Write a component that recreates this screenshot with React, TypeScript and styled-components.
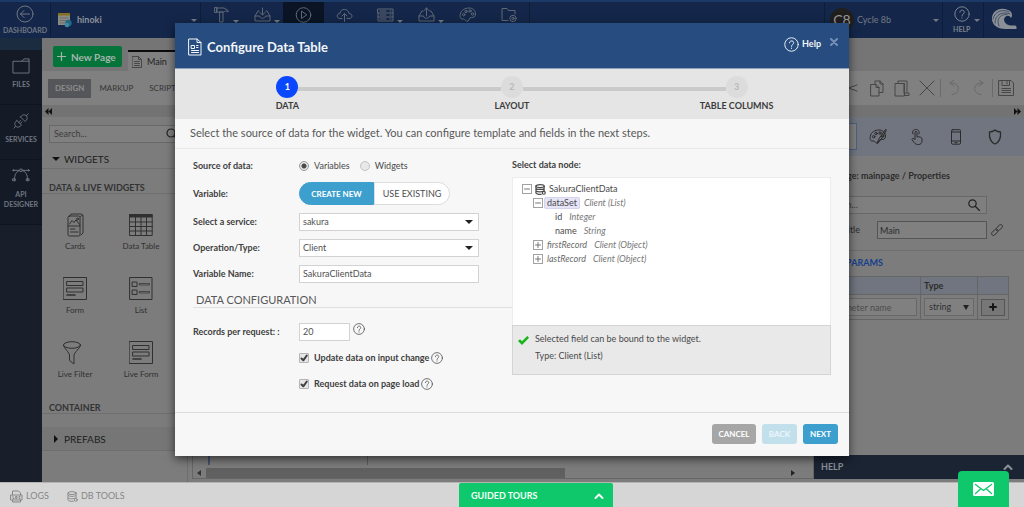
import React from 'react';
import styled, { createGlobalStyle, css } from 'styled-components';

const GlobalStyle = createGlobalStyle`
  *, *::before, *::after { box-sizing: border-box; }
  body { margin: 0; background: #808080; }
  body, button, input, select, table {
    font-family: Lato, "Liberation Sans", sans-serif;
    font-size: 9px;
    line-height: 14px;
  }
  button { cursor: pointer; }
  a { color: inherit; text-decoration: none; }
`;

const Page = styled.div`
  display: flex;
  flex-direction: column;
  min-height: 100vh;
  overflow: hidden;
`;

const Glyph = styled.svg<{ $w?: number; $h?: number; $sw?: number }>`
  width: ${(p) => p.$w ?? 20}px;
  height: ${(p) => p.$h ?? p.$w ?? 20}px;
  flex: none;
  fill: none;
  stroke: currentColor;
  stroke-width: ${(p) => p.$sw ?? 1};
  stroke-linecap: round;
  stroke-linejoin: round;
`;

const Caret = styled.span<{ $color?: string }>`
  width: 0;
  height: 0;
  flex: none;
  border: 3px solid transparent;
  border-top-color: ${(p) => p.$color ?? '#747a84'};
  border-bottom: 0;
`;

/* ---------- top bar ---------- */

const TopBar = styled.header`
  display: flex;
  height: 38px;
  background: #14274a;
  border-top: 2px solid #1b3a68;
  color: #6f7682;
`;

const Dashboard = styled.a`
  width: 51px;
  display: flex;
  flex-direction: column;
  align-items: center;
  padding-top: 3px;
  font-size: 7px;
  line-height: 10px;
  font-weight: 700;
  gap: 2px;
  border-right: 1px solid #0f1e38;
`;

const Project = styled.button`
  width: 150px;
  display: flex;
  align-items: center;
  gap: 4px;
  padding: 0 3px 0 6px;
  border: 0;
  border-right: 1px solid #0f1e38;
  background: none;
  color: #8b919a;
  font-weight: 700;
  span:last-child { margin-left: auto; }
`;

const TopTool = styled.button<{ $active?: boolean }>`
  width: 41px;
  padding: 4px 0 0;
  display: flex;
  align-items: flex-start;
  justify-content: center;
  position: relative;
  border: 0;
  background: ${(p) => (p.$active ? '#0a1424' : 'none')};
  color: #5f6875;
  ${Caret} { position: absolute; right: 3px; top: 18px; }
`;

const TopSpacer = styled.div`
  flex: 1;
  border-left: 1px solid #0f1e38;
  border-right: 1px solid #0f1e38;
`;

const Account = styled.button`
  width: 118px;
  display: flex;
  align-items: center;
  gap: 3px;
  padding: 0 3px 0 5px;
  border: 0;
  border-right: 1px solid #0f1e38;
  background: none;
  color: #747a84;
  > span:last-child { margin-left: auto; }
`;

const Avatar = styled.span`
  width: 24px;
  height: 24px;
  border-radius: 50%;
  display: flex;
  align-items: center;
  justify-content: center;
  background: #211f1e;
  color: #9a9a9a;
  font-size: 14px;
`;

const HelpMenu = styled.button`
  width: 41px;
  display: flex;
  align-items: center;
  gap: 4px;
  padding: 0 4px 0 10px;
  border: 0;
  border-right: 1px solid #0f1e38;
  background: none;
  color: #7b828c;
`;

const HelpStack = styled.span`
  display: flex;
  flex-direction: column;
  align-items: center;
  font-size: 7px;
  line-height: 9px;
  font-weight: 700;
  gap: 3px;
`;

const Logo = styled.a`
  width: 40px;
  display: flex;
  justify-content: center;
  padding-top: 5px;
`;

/* ---------- workspace ---------- */

const Workspace = styled.div`
  flex: 1;
  display: flex;
`;

const SideNav = styled.nav`
  width: 42px;
  background: #181f2b;
  border-top: 12px solid #1c2c40;
  color: #717680;
`;

const SideLink = styled.a`
  display: flex;
  flex-direction: column;
  align-items: center;
  gap: 4px;
  padding: 7px 0 15px;
  border-bottom: 1px solid #0f141d;
  background: #141a26;
  font-size: 7px;
  line-height: 10px;
  font-weight: 700;
  text-align: center;
`;

const Studio = styled.main`
  flex: 1;
  min-width: 0;
  display: flex;
  flex-direction: column;
  background: #7c7c7c;
  color: #2c2c2c;
`;

const PageTabs = styled.div`
  height: 33px;
  display: flex;
  background: #757575;
  padding-left: 11px;
`;

const NewPage = styled.button`
  width: 69px;
  height: 21px;
  margin-top: 8px;
  padding: 0 0 0 4px;
  display: flex;
  align-items: center;
  gap: 5px;
  border: 0;
  border-radius: 2px;
  background: #04743a;
  color: #a5b5ac;
  font-size: 10px;
  font-weight: 700;
  white-space: nowrap;
`;

const PageTab = styled.button`
  width: 100px;
  margin: 12px 0 0 6px;
  padding: 0 0 0 4px;
  display: flex;
  align-items: center;
  gap: 5px;
  border: 0;
  border-top: 2px solid #0b0b0b;
  background: #808080;
  color: #222;
  svg { color: #484848; }
`;

const ToolRow = styled.div`
  height: 34px;
  display: flex;
  align-items: center;
  justify-content: space-between;
  background: #808080;
  padding: 0 9px 0 6px;
`;

const ModeGroup = styled.div`
  display: flex;
`;

const Mode = styled.button<{ $active?: boolean }>`
  height: 19px;
  padding: 0 ${(p) => (p.$active ? 7 : 8)}px;
  border: 0;
  background: ${(p) => (p.$active ? '#55565a' : 'none')};
  color: ${(p) => (p.$active ? '#8c8c8c' : '#353535')};
  font-size: 8px;
  font-weight: ${(p) => (p.$active ? 700 : 400)};
`;

const Actions = styled.div`
  display: flex;
  align-items: center;
  gap: 6px;
`;

const Action = styled.button<{ $faint?: boolean }>`
  width: 19px;
  height: 22px;
  padding: 0;
  display: flex;
  align-items: center;
  justify-content: center;
  border: 0;
  background: none;
  color: ${(p) => (p.$faint ? '#686868' : '#464646')};
`;

const Divider = styled.span`
  width: 1px;
  height: 18px;
  margin: 0 -3px 0 -2px;
  background: #6a6a6a;
`;

const CollapseRow = styled.div`
  height: 12px;
  display: flex;
  align-items: center;
  justify-content: space-between;
  padding: 0 3px;
  background: #737373;
  color: #111;
`;

const Columns = styled.div`
  flex: 1;
  display: flex;
`;

const Palette = styled.aside`
  width: 146px;
  flex: none;
  border-right: 1px solid #6d6d6d;
`;

const SearchBox = styled.label<{ $right?: boolean }>`
  height: 18px;
  display: flex;
  align-items: center;
  margin: ${(p) => (p.$right ? '0 37px 0 6px' : '8px 0 0 7px')};
  padding: 0 ${(p) => (p.$right ? 6 : 8)}px 0 4px;
  border: 1px solid #686868;
  background: ${(p) => (p.$right ? '#7f7f7f' : '#808080')};
  color: #222;
  input {
    flex: 1;
    min-width: 0;
    width: 0;
    padding: 0;
    border: 0;
    outline: 0;
    background: none;
    color: #333;
  }
  input::placeholder { color: #3c3c3c; opacity: 1; }
`;

const Accordion = styled.button<{ $open?: boolean }>`
  width: 100%;
  height: ${(p) => (p.$open ? 19 : 24)}px;
  margin-top: ${(p) => (p.$open ? 7 : 13)}px;
  padding: 0 0 0 10px;
  display: flex;
  align-items: center;
  gap: 4px;
  border: 0;
  border-bottom: 1px solid #6f6f6f;
  background: ${(p) => (p.$open ? 'none' : '#767676')};
  color: #202020;
  font-size: 10px;
`;

const GroupTitle = styled.h3<{ $first?: boolean }>`
  margin: ${(p) => (p.$first ? 13 : 0)}px 0 0;
  padding: 0 0 0 7px;
  height: 12px;
  border-bottom: 1px solid #6f6f6f;
  line-height: 12px;
  font-size: 9px;
  font-weight: 700;
  color: #333;
`;

const Tiles = styled.div`
  display: grid;
  grid-template-columns: 66px 66px;
  grid-template-rows: 64px 64px 61px;
  padding-top: 19px;
`;

const Tile = styled.button`
  padding: 0;
  display: flex;
  flex-direction: column;
  align-items: center;
  gap: 2px;
  border: 0;
  background: none;
  color: #303030;
  font-size: 8px;
  white-space: nowrap;
`;

const Canvas = styled.section`
  flex: 1;
  display: flex;
  flex-direction: column;
  justify-content: flex-end;
  margin: 0 0 3px 4px;
  border: 1px solid #666;
  border-top: 0;
`;

const Sheet = styled.div`
  flex: 1;
  display: grid;
  grid-template-columns: 157px 1fr;
  margin: 0 12px 2px 15px;
  border-left: 2px solid #455472;
  div + div { border-left: 1px solid #5d5d5d; }
`;

const ScrollTrack = styled.div`
  height: 11px;
  display: flex;
  align-items: center;
  justify-content: space-between;
  margin-right: 13px;
  padding: 0 5px 0 4px;
`;

const ScrollThumb = styled.div`
  width: 60%;
  height: 10px;
  margin: 0 auto 0 5px;
  background: #606060;
`;

const Inspector = styled.aside`
  width: 210px;
  flex: none;
  display: flex;
  flex-direction: column;
  margin-bottom: 3px;
  background: #7c7c7c;
`;

const InspectorTabs = styled.div`
  height: 39px;
  display: flex;
  align-items: center;
  justify-content: flex-end;
  padding-right: 10px;
  background: #70757f;
`;

const InspectorTab = styled.button<{ $active?: boolean }>`
  width: 39px;
  height: 27px;
  padding: 0;
  display: flex;
  align-items: center;
  justify-content: center;
  border: 1px solid ${(p) => (p.$active ? '#4d5f86' : 'transparent')};
  background: ${(p) => (p.$active ? '#808080' : 'none')};
  color: #2b2b2b;
  &:first-child { margin-right: 1px; }
`;

const Breadcrumb = styled.h2`
  margin: 12px 0 13px 23px;
  font-size: 9px;
  line-height: 15px;
  font-weight: 700;
`;

const TitleField = styled.label`
  display: flex;
  align-items: center;
  justify-content: flex-end;
  margin-top: 7px;
  padding: 0 20px 11px 0;
  border-bottom: 1px solid #6f6f6f;
  color: #2c2c2c;
  input {
    width: 110px;
    height: 18px;
    margin: 0 3px 0 17px;
    padding: 0 2px;
    border: 1px solid #555;
    background: #808080;
    color: #2c2c2c;
  }
`;

const ParamsTitle = styled.h3`
  margin: 5px 0 6px;
  padding-left: 7px;
  font-size: 9px;
  line-height: 14px;
  font-weight: 700;
  color: #173f8c;
`;

const ParamTable = styled.table`
  width: 195px;
  border-collapse: collapse;
  table-layout: fixed;
  td, th { border: 1px solid #656565; padding: 0 3px; text-align: left; }
  th { height: 18px; background: #70757f; font-weight: 700; }
  td { height: 25px; }
  input, select {
    width: 100%;
    height: 18px;
    padding: 0 4px;
    border: 1px solid #686868;
    background: #808080;
    color: #333;
    display: block;
    appearance: none;
  }
  input { padding-left: 8px; }
  input::placeholder { color: #4c4c4c; opacity: 1; text-align: left; }
`;

const TypeSelect = styled.div`
  display: flex;
  align-items: center;
  position: relative;
  ${Caret} { position: absolute; right: 5px; border-width: 5px 3px 0; }
`;

const AddButton = styled.button`
  width: 24px;
  height: 17px;
  padding: 0;
  display: flex;
  align-items: center;
  justify-content: center;
  border: 1px solid #555;
  background: #777;
  color: #151515;
`;

const HelpBar = styled.button`
  height: 24px;
  margin-top: auto;
  padding: 0 11px 0 7px;
  display: flex;
  align-items: center;
  justify-content: space-between;
  border: 0;
  background: #1b2433;
  color: #8b9099;
  font-weight: 700;
`;

/* ---------- status bar ---------- */

const StatusBar = styled.footer`
  height: 25px;
  display: flex;
  align-items: center;
  gap: 18px;
  padding: 2px 0 0 10px;
  border-top: 1px solid #b4b4b4;
  background: #d6d6d6;
  color: #868686;
  position: relative;
`;

const StatusLink = styled.a`
  display: flex;
  align-items: center;
  gap: 3px;
`;

const Tours = styled.button`
  position: absolute;
  left: 459px;
  bottom: 0;
  width: 154px;
  height: 24px;
  padding: 2px 9px 0 12px;
  display: flex;
  align-items: center;
  justify-content: space-between;
  border: 0;
  border-radius: 2px 2px 0 0;
  background: #0fc86c;
  color: #f2fff8;
  font-weight: 700;
`;

const Chat = styled.button`
  position: absolute;
  right: 15px;
  bottom: 0;
  width: 51px;
  height: 36px;
  padding: 0;
  display: flex;
  align-items: center;
  justify-content: center;
  border: 0;
  border-radius: 4px 4px 0 0;
  background: #0fc86c;
`;

/* ---------- dialog ---------- */

const Overlay = styled.div`
  position: absolute;
  top: 23px;
  left: 175px;
  right: 175px;
`;

const Dialog = styled.section`
  background: #f7f7f7;
  box-shadow: 0 3px 9px rgba(0, 0, 0, 0.6);
  color: #4a4a4a;
`;

const DialogHead = styled.header`
  height: 46px;
  display: flex;
  align-items: center;
  gap: 5px;
  padding: 2px 10px 0 13px;
  background: #274c7f;
  border-bottom: 1px solid #8ea0ba;
  color: #f2f5f9;
  h1 {
    margin: 0;
    flex: 1;
    font-size: 13px;
    line-height: 18px;
    font-weight: 700;
  }
`;

const DialogHelp = styled.a`
  display: flex;
  align-items: center;
  gap: 3px;
  margin-right: 3px;
  padding-bottom: 5px;
  font-size: 9px;
  font-weight: 700;
`;

const Close = styled.button`
  width: 10px;
  height: 14px;
  margin-bottom: 8px;
  padding: 0;
  border: 0;
  background: none;
  color: #7590b8;
`;

const Steps = styled.ol`
  height: 50px;
  margin: 0;
  padding: 7px 0 0;
  display: grid;
  grid-template-columns: repeat(3, 1fr);
  background: #e5e5e5;
  list-style: none;
`;

const Step = styled.li<{ $active?: boolean; $joined?: boolean }>`
  position: relative;
  display: flex;
  flex-direction: column;
  align-items: center;
  gap: 1px;
  color: #3c3c3c;
  font-weight: 700;
  ${(p) => p.$joined && css`
    &::before {
      content: '';
      position: absolute;
      top: 11px;
      right: calc(50% + 11px);
      width: calc(100% - 22px);
      height: 4px;
      background: #cacaca;
    }
  `}
  span {
    width: 22px;
    height: 22px;
    border-radius: 50%;
    line-height: 22px;
    text-align: center;
    background: ${(p) => (p.$active ? '#0a48ff' : '#dcdcdc')};
    color: ${(p) => (p.$active ? '#fff' : '#b9b9b9')};
  }
`;

const Intro = styled.p`
  margin: 0;
  padding: 7px 15px 8px;
  border-bottom: 1px solid #e8e8e8;
  font-size: 11px;
  line-height: 14px;
  color: #585858;
`;

const DialogBody = styled.div`
  display: grid;
  grid-template-columns: 1fr 1fr;
  padding: 7px 18px 19px;
`;

const Form = styled.form`
  display: flex;
  flex-direction: column;
  gap: 7px;
`;

const Field = styled.div`
  display: grid;
  grid-template-columns: 106px 180px;
  align-items: center;
  min-height: 19px;
`;

const caption = css`
  font-size: 9px;
  font-weight: 700;
  color: #404040;
`;

const Caption = styled.label`
  ${caption}
`;

const Choices = styled.div`
  display: flex;
  align-items: center;
  gap: 10px;
`;

const Choice = styled.label`
  display: flex;
  align-items: center;
  gap: 5px;
  input {
    appearance: none;
    width: 10px;
    height: 10px;
    margin: 0;
    border: 1px solid #c4c4c4;
    border-radius: 50%;
    background: #e8e8e8;
  }
  input:checked { background: radial-gradient(circle, #4a4a4a 0 2px, #e6e6e6 3px); border-color: #999; }
`;

const Toggle = styled.div`
  width: 151px;
  height: 23px;
  display: flex;
`;

const ToggleOption = styled.button<{ $active?: boolean }>`
  flex: ${(p) => (p.$active ? '0 0 75px' : '1')};
  padding: 0;
  border: 1px solid ${(p) => (p.$active ? '#3c9fce' : '#dcdcdc')};
  border-radius: ${(p) => (p.$active ? '12px 0 0 12px' : '0 12px 12px 0')};
  background: ${(p) => (p.$active ? '#3c9fce' : '#fff')};
  color: ${(p) => (p.$active ? '#fff' : '#4e4e4e')};
  font-size: ${(p) => (p.$active ? 8 : 9)}px;
  font-weight: ${(p) => (p.$active ? 700 : 400)};
`;

const controlBox = css`
  width: 100%;
  height: 18px;
  padding: 0 3px;
  border: 1px solid #d2d2d2;
  border-radius: 0;
  background: #fff;
  color: #505050;
  appearance: none;
`;

const TextInput = styled.input<{ $short?: boolean }>`
  ${controlBox}
  ${(p) => p.$short && 'width: 51px;'}
`;

const SelectWrap = styled.div`
  position: relative;
  display: flex;
  align-items: center;
  select { ${controlBox} }
  ${Caret} { position: absolute; right: 6px; border-width: 4px 4px 0; }
`;

const SectionTitle = styled.h2`
  margin: -7px 0 7px;
  height: 25px;
  padding: 10px 3px 0;
  border-bottom: 1px solid #e0e0e0;
  font-size: 11px;
  line-height: 14px;
  font-weight: 400;
  color: #585858;
`;

const InlineControl = styled.div`
  display: flex;
  align-items: flex-start;
  gap: 3px;
`;

const CheckRow = styled.div`
  height: 19px;
  display: flex;
  align-items: center;
  gap: 2px;
  padding-left: 106px;
  label {
    display: flex;
    align-items: center;
    gap: 5px;
    ${caption}
  }
  input {
    appearance: none;
    width: 10px;
    height: 10px;
    margin: 0;
    border: 1px solid #b5b5b5;
    border-radius: 1px;
    background: #e6e6e6;
  }
`;

const CheckBox = styled.span`
  display: flex;
  position: relative;
  svg { position: absolute; inset: 0; pointer-events: none; }
`;

const NodePane = styled.div`
  display: flex;
  flex-direction: column;
`;

const PaneTitle = styled.h2`
  margin: 2px 0 5px;
  line-height: 14px;
  ${caption}
`;

const Tree = styled.ul`
  height: 148px;
  margin: 0;
  padding: 4px 9px;
  border: 1px solid #ececec;
  border-bottom: 0;
  background: #fff;
  list-style: none;
`;

const TreeRow = styled.li<{ $level: number }>`
  height: 14px;
  display: flex;
  align-items: center;
  gap: 3px;
  padding-left: ${(p) => p.$level * 11}px;
  em { margin-left: 4px; color: #777; }
`;

const Expander = styled.button`
  width: 10px;
  height: 10px;
  padding: 0;
  display: flex;
  align-items: center;
  justify-content: center;
  border: 1px solid #a2a2a2;
  background: #fff;
  color: #777;
`;

const NodeName = styled.span<{ $selected?: boolean; $italic?: boolean }>`
  ${(p) => p.$italic && 'font-style: italic; color: #6a6a6a; padding-left: 1px;'}
  ${(p) => p.$selected && css`
    height: 12px;
    line-height: 10px;
    margin: 0 -3px 0 -2px;
    padding: 0 2px;
    border: 1px solid #d6d3ee;
    border-radius: 2px;
    background: #e6e4f7;
  `}
`;

const Verdict = styled.div`
  height: 50px;
  display: flex;
  gap: 6px;
  padding: 4px 5px;
  border: 1px solid #d4d4d4;
  background: #e9e9e9;
  p { margin: 0; line-height: 17px; }
  svg { margin-top: 5px; }
`;

const DialogFoot = styled.footer`
  display: flex;
  justify-content: flex-end;
  gap: 6px;
  padding: 11px 11px 12px;
  border-top: 1px solid #dcdcdc;
`;

const footColors = { cancel: '#a6a6a6', back: '#c2dfec', next: '#3c9fce' };

const FootButton = styled.button<{ $kind: keyof typeof footColors }>`
  width: ${(p) => (p.$kind === 'cancel' ? 44 : 35)}px;
  height: 20px;
  padding: 0;
  border: 0;
  border-radius: 3px;
  background: ${(p) => footColors[p.$kind]};
  color: ${(p) => (p.$kind === 'back' ? '#edf7fb' : '#fff')};
  font-size: 8px;
  font-weight: 700;
`;

/* ---------- drawings ---------- */

const HelpGlyph = ({ size, sw = 1 }: { size: number; sw?: number }) => (
  <Glyph $w={size} $sw={sw} viewBox="0 0 16 16" aria-hidden="true">
    <circle cx="8" cy="8" r="7.2" />
    <path d="M5.8 6.2C5.8 3.4 10.3 3.4 10.3 6.1C10.3 7.8 8 8 8 10M8 11.8V12.2" />
  </Glyph>
);

const InboxGlyph = ({ up }: { up?: boolean }) => (
  <Glyph $w={17} $h={17} viewBox="0 0 17 17" aria-hidden="true">
    <path d="M5 5H4L1 10V15H16V10L13 5H12M1 10H5.5C5.5 13 11.5 13 11.5 10H16" />
    <path d={up ? 'M8.5 10V2M6 4.5L8.5 2L11 4.5' : 'M8.5 2V9M6 6.5L8.5 9L11 6.5'} />
  </Glyph>
);

const PaletteGlyph = ({ brush }: { brush?: boolean }) => (
  <Glyph $w={18} $h={18} viewBox="0 0 18 18" aria-hidden="true">
    <path d="M9 15C7 16.5 6 12.5 4 13C1.5 13.5.8 11 1.2 8.5C2 4 6 2 10 2C14 2 16.5 4.5 16.5 8C16.5 11 14.5 11.5 12.5 11.5C9.5 11.5 11 13.8 9 15Z" />
    <circle cx="4.7" cy="8.7" r="1.2" /><circle cx="7" cy="5.5" r="1.2" />
    <circle cx="11" cy="5" r="1.2" /><circle cx="13.6" cy="8" r="1.2" />
    {brush && <path d="M16.5 1.5L10.5 10L8 15L12 11.5L17 3Z" />}
  </Glyph>
);

const DatabaseGlyph = ({ size, sw = 1 }: { size: number; sw?: number }) => (
  <Glyph $w={size} $sw={sw} viewBox="0 0 12 12" aria-hidden="true">
    <ellipse cx="5.5" cy="2.3" rx="4.5" ry="1.6" />
    <path d="M1 2.3V4.3C1 6.4 10 6.4 10 4.3V2.3M1 5.2V7C1 9 9 9 10 7V5.2M1 8V9.7C1 11 5 11.6 7 11.2" />
    <circle cx="9.6" cy="9.6" r="1.6" />
  </Glyph>
);

const FormGlyph = () => (
  <Glyph $w={24} $sw={1} viewBox="0 0 24 24" aria-hidden="true">
    <rect x=".5" y=".5" width="23" height="22" />
    <rect x="4" y="4.5" width="16" height="4" /><rect x="4" y="11" width="16" height="4" />
    <path d="M4 18H12" strokeWidth="1.6" />
  </Glyph>
);

const CardsGlyph = () => (
  <Glyph $w={24} viewBox="0 0 24 24" aria-hidden="true">
    <rect x="5" y="3" width="12" height="20" rx="1.5" />
    <path d="M7 2.5L8 1H18.5L20 2.5V20L18 22M17.5 3.5L19.5 2M5 13H17M6.5 11L9 7.5L11 9.5L13 7L16.5 11.5M7.5 16H12M7.5 19H15" />
    <circle cx="14.5" cy="6" r="1" />
  </Glyph>
);

const TableGlyph = () => (
  <Glyph $w={24} viewBox="0 0 24 24" aria-hidden="true">
    <path d="M.8 1.5H23.2V22.5H.8ZM.8 9H23.2M.8 13.5H23.2M.8 18H23.2M6.5 4V22.5M12 4V22.5M17.5 4V22.5" />
    <path d="M1 1.5H23V4H1Z" fill="currentColor" />
  </Glyph>
);

const ListGlyph = () => (
  <Glyph $w={24} viewBox="0 0 24 24" aria-hidden="true">
    <rect x="1" y=".5" width="22" height="22" />
    <rect x="3.5" y="5" width="4.5" height="4.5" /><rect x="3.5" y="13" width="4.5" height="4.5" />
    <path d="M10.5 6.5H20.5V8H10.5ZM10.5 14.5H20.5V16H10.5Z" strokeWidth=".7" />
  </Glyph>
);

const FilterGlyph = () => (
  <Glyph $w={24} viewBox="0 0 24 24" aria-hidden="true">
    <ellipse cx="9" cy="4" rx="8.5" ry="3.3" />
    <path d="M.5 4.5C1 7 6.5 12 6.5 14V19.5L11 23V14C11 12 17 7 17.5 4.5" />
  </Glyph>
);

const Chevron = () => (
  <Glyph $w={10} $h={10} $sw={2} viewBox="0 0 10 10" aria-hidden="true">
    <path d="M1.5 7L5 3.5L8.5 7" />
  </Glyph>
);

const Tick = () => (
  <Glyph $w={10} $sw={2} viewBox="0 0 10 10" aria-hidden="true"><path d="M2.5 5.5L4.3 7.3L7.8 2.5" /></Glyph>
);

const Arrows = ({ right }: { right?: boolean }) => (
  <Glyph $w={7} $h={7} $sw={0} viewBox="0 0 7 7" aria-hidden="true">
    <path fill="currentColor" d={right ? 'M0 0L3.5 3.5L0 7ZM3.5 0L7 3.5L3.5 7Z' : 'M7 0L3.5 3.5L7 7ZM3.5 0L0 3.5L3.5 7Z'} />
  </Glyph>
);

const Plus = ({ minus }: { minus?: boolean }) => (
  <Glyph $w={8} viewBox="0 0 8 8" aria-hidden="true"><path d={minus ? 'M1.5 4H6.5' : 'M1.5 4H6.5M4 1.5V6.5'} /></Glyph>
);

const WIDGETS: [string, () => React.JSX.Element][] = [
  ['Cards', CardsGlyph],
  ['Data Table', TableGlyph],
  ['Form', FormGlyph],
  ['List', ListGlyph],
  ['Live Filter', FilterGlyph],
  ['Live Form', FormGlyph],
];

function Header() {
  return (
    <TopBar>
      <Dashboard href="#dashboard">
        <Glyph $w={18} viewBox="0 0 18 18" aria-hidden="true"><circle cx="9" cy="9" r="8" /><path d="M13.5 9H4.5M8 5.5L4.5 9L8 12.5" /></Glyph>
        DASHBOARD
      </Dashboard>
      <Project>
        <Glyph $w={16} $sw={0} viewBox="0 0 16 16" aria-hidden="true">
          <rect x="1" y="1" width="12" height="12" fill="#8b8b86" /><rect x="1" y="1" width="12" height="2.5" fill="#86701f" />
          <path d="M3 6H11M3 8.5H11M3 11H8" stroke="#626262" strokeWidth=".7" />
          <circle cx="11.5" cy="11" r="3.2" fill="#216a86" /><circle cx="10" cy="13" r="2.3" fill="#3b89a3" />
        </Glyph>
        <span>hinoki</span>
        <Caret />
      </Project>
      <TopTool aria-label="Build">
        <Glyph $w={17} viewBox="0 0 17 17" aria-hidden="true"><path d="M4 2H11L15 4.5V6C13 4.5 12 5 11 6H4ZM2 1.5H4V6.5H2ZM7 6H10V16H7Z" /></Glyph>
        <Caret />
      </TopTool>
      <TopTool aria-label="Import"><InboxGlyph /><Caret /></TopTool>
      <TopTool aria-label="Run" $active>
        <Glyph $w={17} viewBox="0 0 17 17" aria-hidden="true"><circle cx="8.5" cy="9" r="7.3" /><path d="M6.5 5.5V12.5L11.5 9Z" /></Glyph>
      </TopTool>
      <TopTool aria-label="Deploy">
        <Glyph $w={17} viewBox="0 0 17 17" aria-hidden="true"><path d="M6 12.5H4C.3 12.5 .3 7.5 4 7.5C4 2 12.5 2 13 7.5C17 7.5 17 12.5 13 12.5H11M8.5 15.5V8M6 10L8.5 7.5L11 10" /></Glyph>
      </TopTool>
      <TopTool aria-label="Servers">
        <Glyph $w={17} viewBox="0 0 17 17" aria-hidden="true"><path d="M1 3H16V7H1ZM1 7V11H16V7M1 11V15H16V11M3 5H9M3 9H9M3 13H9M13 5H14M13 9H14M13 13H14" /></Glyph>
        <Caret />
      </TopTool>
      <TopTool aria-label="Export"><InboxGlyph up /><Caret /></TopTool>
      <TopTool aria-label="Theme"><PaletteGlyph /></TopTool>
      <TopTool aria-label="Project settings">
        <Glyph $w={17} viewBox="0 0 17 17" aria-hidden="true"><path d="M8 14.5H2V2.5H7L8.5 4.5H15V8" /><circle cx="13" cy="12.5" r="3.2" /><circle cx="13" cy="12.5" r="1.2" /></Glyph>
      </TopTool>
      <TopSpacer />
      <Account>
        <Avatar>C8</Avatar><span>Cycle 8b</span><Caret />
      </Account>
      <HelpMenu>
        <HelpStack><HelpGlyph size={16} />HELP</HelpStack>
        <Caret />
      </HelpMenu>
      <Logo href="#home" aria-label="Home">
        <Glyph $w={26} $h={23} $sw={0} viewBox="0 0 26 23" aria-hidden="true">
          <path fill="#8b8f96" d="M17 3C8-1 0 5 1 13C2 19 8 22 14 22H25C26 22 26 19 24 18.5C17 19 14 17 13 13C13 9 18 7 20 11C22 9 21 4 17 3Z" />
          <path fill="none" stroke="#14274a" strokeWidth=".6" d="M2 12C4 3 13 2 18 5M4 16C4 7 12 4 19 7M8 19C5 12 9 7 16 7.5" />
        </Glyph>
      </Logo>
    </TopBar>
  );
}

function Sidebar() {
  return (
    <SideNav>
      <SideLink href="#files">
        <Glyph $w={20} $h={18} viewBox="0 0 20 19" aria-hidden="true"><path d="M1.5 16.5V4.5H11L13 2H18.5V16.5ZM11 4.5H18.5" /></Glyph>
        FILES
      </SideLink>
      <SideLink href="#services">
        <Glyph $w={20} $h={18} viewBox="0 0 20 20" aria-hidden="true">
          <path d="M2 18L4 16M5.5 9.5L10.5 14.5C9 17 6.5 17.5 4 16C2.5 13.5 3 11 5.5 9.5ZM7.5 11.5L9.5 9.5M9 13L11 11M18 2L16 4M9.5 5.5L14.5 10.5C17 9 17.5 6.5 16 4C13.5 2.5 11 3 9.5 5.5Z" />
        </Glyph>
        SERVICES
      </SideLink>
      <SideLink href="#api">
        <Glyph $w={20} $h={18} viewBox="0 0 20 19" aria-hidden="true">
          <path d="M2 3.5H18M3 14C3 8 5 4 10 3.5C15 4 17 8 17 14" /><circle cx="10" cy="3.5" r="1.5" fill="#141a26" />
          <circle cx="2" cy="3.5" r=".7" /><circle cx="18" cy="3.5" r=".7" /><path d="M1.5 12.5H4V14.5H1.5ZM16 12.5H18.5V14.5H16Z" />
        </Glyph>
        <span>API<br />DESIGNER</span>
      </SideLink>
    </SideNav>
  );
}

function WidgetPalette() {
  return (
    <Palette>
      <SearchBox>
        <input placeholder="Search..." aria-label="Search widgets" />
        <Glyph $w={12} viewBox="0 0 12 12" $sw={1.2} aria-hidden="true"><circle cx="5" cy="5" r="4" /><path d="M8 8L11 11" /></Glyph>
      </SearchBox>
      <Accordion $open>
        <Glyph $w={8} $sw={0} viewBox="0 0 8 8" aria-hidden="true"><path fill="#111" d="M0 2H8L4 6Z" /></Glyph>
        WIDGETS
      </Accordion>
      <GroupTitle $first>DATA &amp; LIVE WIDGETS</GroupTitle>
      <Tiles>
        {WIDGETS.map(([name, Drawing]) => (
          <Tile key={name}><Drawing />{name}</Tile>
        ))}
      </Tiles>
      <GroupTitle>CONTAINER</GroupTitle>
      <Accordion>
        <Glyph $w={8} $sw={0} viewBox="0 0 8 8" aria-hidden="true"><path fill="#111" d="M2 0V8L6 4Z" /></Glyph>
        PREFABS
      </Accordion>
    </Palette>
  );
}

function Properties() {
  return (
    <Inspector>
      <InspectorTabs>
        <InspectorTab $active aria-label="Properties" />
        <InspectorTab aria-label="Styles"><PaletteGlyph brush /></InspectorTab>
        <InspectorTab aria-label="Events">
          <Glyph $w={16} $h={18} viewBox="0 0 16 18" aria-hidden="true"><path d="M6 11V4.5C6 3 8 3 8 4.5V9C10 8.5 13 9 13 11V13C13 17.5 7 17.5 5 14.5L3 11.5C3 10 5 10 6 11.5" /><path d="M4 6C2.5 2.5 5 1.5 7 1.5C9 1.5 11 3 10 6" /></Glyph>
        </InspectorTab>
        <InspectorTab aria-label="Device">
          <Glyph $w={14} $h={16} viewBox="0 0 14 16" aria-hidden="true"><rect x="2.5" y=".7" width="9" height="14.5" rx="1" /><path d="M2.5 3H11.5M2.5 12H11.5M6 13.7H8" /></Glyph>
        </InspectorTab>
        <InspectorTab aria-label="Security">
          <Glyph $w={14} $h={16} viewBox="0 0 14 16" $sw={1.3} aria-hidden="true"><path d="M7 1C5 2.8 3 3 1.5 3C1 9 2 13 7 15C12 13 13 9 12.5 3C11 3 9 2.8 7 1Z" /></Glyph>
        </InspectorTab>
      </InspectorTabs>
      <Breadcrumb>Page: mainpage / Properties</Breadcrumb>
      <SearchBox $right>
        <input placeholder="Search..." aria-label="Search properties" />
        <Glyph $w={12} viewBox="0 0 12 12" $sw={1.2} aria-hidden="true"><circle cx="4.5" cy="4.5" r="3.7" /><path d="M7.5 7.5L11.5 11.5" /></Glyph>
      </SearchBox>
      <TitleField>
        Title
        <input defaultValue="Main" />
        <Glyph $w={14} viewBox="0 0 14 14" aria-hidden="true"><path d="M6.5 5L9.5 2C11 .5 13.5 3 12 4.5L9 7.5C8 8.5 6.5 8 6 7M7.5 9L4.5 12C3 13.5 .5 11 2 9.5L5 6.5C6 5.5 7.5 6 8 7" /></Glyph>
      </TitleField>
      <ParamsTitle>PAGE PARAMS</ParamsTitle>
      <ParamTable>
        <colgroup><col /><col width="57" /><col width="31" /></colgroup>
        <thead><tr><th aria-label="Name" /><th>Type</th><th aria-label="Add" /></tr></thead>
        <tbody>
          <tr>
            <td><input placeholder="Parameter name" aria-label="Parameter name" /></td>
            <td><TypeSelect><select aria-label="Type"><option>string</option></select><Caret $color="#222" /></TypeSelect></td>
            <td>
              <AddButton aria-label="Add parameter"><Glyph $w={8} $sw={2} viewBox="0 0 8 8" aria-hidden="true"><path d="M1 4H7M4 1V7" /></Glyph></AddButton>
            </td>
          </tr>
        </tbody>
      </ParamTable>
      <HelpBar>HELP<Chevron /></HelpBar>
    </Inspector>
  );
}

function ConfigureDialog() {
  return (
    <Overlay>
      <Dialog role="dialog" aria-labelledby="dialog-title">
        <DialogHead>
          <Glyph $w={14} $h={18} viewBox="0 0 14 18" aria-hidden="true"><path d="M1 1H9L13 4.5V17H1ZM9 1V4.5H13M3.5 7.5H6.5V10.5H3.5ZM8.5 7.5H10M8.5 9.5H10M3.5 12.5H10.5M3.5 14.5H10.5" /></Glyph>
          <h1 id="dialog-title">Configure Data Table</h1>
          <DialogHelp href="#help"><HelpGlyph size={15} />Help</DialogHelp>
          <Close aria-label="Close">
            <Glyph $w={8} $sw={2} viewBox="0 0 8 8" aria-hidden="true"><path d="M1 1L7 7M7 1L1 7" /></Glyph>
          </Close>
        </DialogHead>
        <Steps>
          <Step $active><span>1</span>DATA</Step>
          <Step $joined><span>2</span>LAYOUT</Step>
          <Step $joined><span>3</span>TABLE COLUMNS</Step>
        </Steps>
        <Intro>Select the source of data for the widget. You can configure template and fields in the next steps.</Intro>
        <DialogBody>
          <Form>
            <Field>
              <Caption as="span">Source of data:</Caption>
              <Choices>
                <Choice><input type="radio" name="source" defaultChecked />Variables</Choice>
                <Choice><input type="radio" name="source" />Widgets</Choice>
              </Choices>
            </Field>
            <Field>
              <Caption as="span">Variable:</Caption>
              <Toggle>
                <ToggleOption type="button" $active>CREATE NEW</ToggleOption>
                <ToggleOption type="button">USE EXISTING</ToggleOption>
              </Toggle>
            </Field>
            <Field>
              <Caption htmlFor="service">Select a service:</Caption>
              <SelectWrap><select id="service"><option>sakura</option></select><Caret $color="#222" /></SelectWrap>
            </Field>
            <Field>
              <Caption htmlFor="operation">Operation/Type:</Caption>
              <SelectWrap><select id="operation"><option>Client</option></select><Caret $color="#222" /></SelectWrap>
            </Field>
            <Field>
              <Caption htmlFor="varname">Variable Name:</Caption>
              <TextInput id="varname" defaultValue="SakuraClientData" />
            </Field>
            <SectionTitle>DATA CONFIGURATION</SectionTitle>
            <Field>
              <Caption htmlFor="records">Records per request: :</Caption>
              <InlineControl><TextInput id="records" $short defaultValue="20" /><HelpGlyph size={12} /></InlineControl>
            </Field>
            <CheckRow>
              <label><CheckBox><input type="checkbox" defaultChecked /><Tick /></CheckBox>Update data on input change</label>
              <HelpGlyph size={12} />
            </CheckRow>
            <CheckRow>
              <label><CheckBox><input type="checkbox" defaultChecked /><Tick /></CheckBox>Request data on page load</label>
              <HelpGlyph size={12} />
            </CheckRow>
          </Form>
          <NodePane>
            <PaneTitle>Select data node:</PaneTitle>
            <Tree>
              <TreeRow $level={0}><Expander aria-label="Collapse"><Plus minus /></Expander><DatabaseGlyph size={11} sw={1.3} /><NodeName>SakuraClientData</NodeName></TreeRow>
              <TreeRow $level={1}><Expander aria-label="Collapse"><Plus minus /></Expander><NodeName $selected>dataSet</NodeName><em>Client (List)</em></TreeRow>
              <TreeRow $level={3}><NodeName>id</NodeName><em>Integer</em></TreeRow>
              <TreeRow $level={3}><NodeName>name</NodeName><em>String</em></TreeRow>
              <TreeRow $level={1}><Expander aria-label="Expand"><Plus /></Expander><NodeName $italic>firstRecord</NodeName><em>Client (Object)</em></TreeRow>
              <TreeRow $level={1}><Expander aria-label="Expand"><Plus /></Expander><NodeName $italic>lastRecord</NodeName><em>Client (Object)</em></TreeRow>
            </Tree>
            <Verdict>
              <Glyph $w={11} $sw={0} viewBox="0 0 11 11" aria-hidden="true"><path fill="#16b51a" d="M0 6L2 4.2L4 6.2L9.3 1L11 2.8L4 10Z" /></Glyph>
              <div><p>Selected field can be bound to the widget.</p><p>Type: Client (List)</p></div>
            </Verdict>
          </NodePane>
        </DialogBody>
        <DialogFoot>
          <FootButton $kind="cancel">CANCEL</FootButton>
          <FootButton $kind="back">BACK</FootButton>
          <FootButton $kind="next">NEXT</FootButton>
        </DialogFoot>
      </Dialog>
    </Overlay>
  );
}

export default function App() {
  return (
    <Page>
      <GlobalStyle />
      <Header />
      <Workspace>
        <Sidebar />
        <Studio>
          <PageTabs>
            <NewPage><Glyph $w={9} $sw={1.2} viewBox="0 0 9 9" aria-hidden="true"><path d="M4.5 .5V8.5M.5 4.5H8.5" /></Glyph>New Page</NewPage>
            <PageTab><Glyph $w={10} $h={12} viewBox="0 0 10 12" aria-hidden="true"><path d="M.5 .5H6.5L9.5 3.5V11.5H.5ZM6.5 .5V3.5H9.5M2.5 5.5H7.5M2.5 7.5H7.5M2.5 9.5H7.5" /></Glyph>Main</PageTab>
          </PageTabs>
          <ToolRow>
            <ModeGroup>
              <Mode $active>DESIGN</Mode><Mode>MARKUP</Mode><Mode>SCRIPT</Mode>
            </ModeGroup>
            <Actions>
              <Action aria-label="Cut"><Glyph $w={14} viewBox="0 0 14 14" aria-hidden="true"><path d="M12 4L3 7L12 10" /></Glyph></Action>
              <Action aria-label="Copy"><Glyph $w={14} $h={17} viewBox="0 0 14 17" aria-hidden="true"><path d="M5 4.5V1H10L13 4V12.5H9M10 1V4H13M1 4.5H6L9 7.5V16H1ZM6 4.5V7.5H9" /></Glyph></Action>
              <Action aria-label="Paste"><Glyph $w={16} $h={17} viewBox="0 0 16 17" aria-hidden="true"><path d="M4 3.5V1H13V12M10 3.5H1V16H10ZM10 3.5V13M11 13H15V15.5H11Z" /></Glyph></Action>
              <Action aria-label="Delete"><Glyph $w={16} viewBox="0 0 16 16" aria-hidden="true"><path d="M1 1L15 15M15 1L1 15" /></Glyph></Action>
              <Divider />
              <Action $faint aria-label="Undo"><Glyph $w={14} $h={18} viewBox="0 0 14 18" aria-hidden="true"><path d="M7 1L3 4L7 7M3 4C14 3 14 15 5 15.5" /></Glyph></Action>
              <Action $faint aria-label="Redo"><Glyph $w={14} $h={18} viewBox="0 0 14 18" aria-hidden="true"><path d="M7 1L11 4L7 7M11 4C0 3 0 15 9 15.5" /></Glyph></Action>
              <Divider />
              <Action aria-label="Save"><Glyph $w={16} viewBox="0 0 16 16" aria-hidden="true"><path d="M1 .5H13L15.5 3V15.5H1ZM4 .5V5.5H11.5V.5M9 1.5V4M4 8.5H12.5M4 10.5H12.5M4 12.5H12.5" /></Glyph></Action>
            </Actions>
          </ToolRow>
          <CollapseRow><Arrows /><Arrows right /></CollapseRow>
          <Columns>
            <WidgetPalette />
            <Canvas>
              <Sheet><div /><div /></Sheet>
              <ScrollTrack>
                <Glyph $w={4} $h={6} $sw={0} viewBox="0 0 4 6" aria-hidden="true"><path fill="#333" d="M4 0V6L0 3Z" /></Glyph>
                <ScrollThumb />
                <Glyph $w={4} $h={6} $sw={0} viewBox="0 0 4 6" aria-hidden="true"><path fill="#222" d="M0 0V6L4 3Z" /></Glyph>
              </ScrollTrack>
            </Canvas>
            <Properties />
          </Columns>
        </Studio>
      </Workspace>
      <StatusBar>
        <StatusLink href="#logs">
          <Glyph $w={13} viewBox="0 0 13 13" aria-hidden="true"><path d="M2.5 5V1H8.5L10.5 3V5M1 5H12V10H1ZM2.5 10V12H10.5V10M3 6.5V8.5H4M6 6.5H7V8.5H6ZM10 6.5H9V8.5H10" /></Glyph>
          LOGS
        </StatusLink>
        <StatusLink href="#db"><DatabaseGlyph size={11} />DB TOOLS</StatusLink>
        <Tours>GUIDED TOURS<Chevron /></Tours>
        <Chat aria-label="Messages">
          <Glyph $w={21} $h={14} $sw={0} viewBox="0 0 21 14" aria-hidden="true">
            <rect width="21" height="14" rx="1.5" fill="#fff" />
            <path d="M2.5 2.5L10.5 8.5L18.5 2.5M2.5 11.5L7.5 7M18.5 11.5L13.5 7" fill="none" stroke="#0fc86c" strokeWidth="1.3" />
          </Glyph>
        </Chat>
      </StatusBar>
      <ConfigureDialog />
    </Page>
  );
}
